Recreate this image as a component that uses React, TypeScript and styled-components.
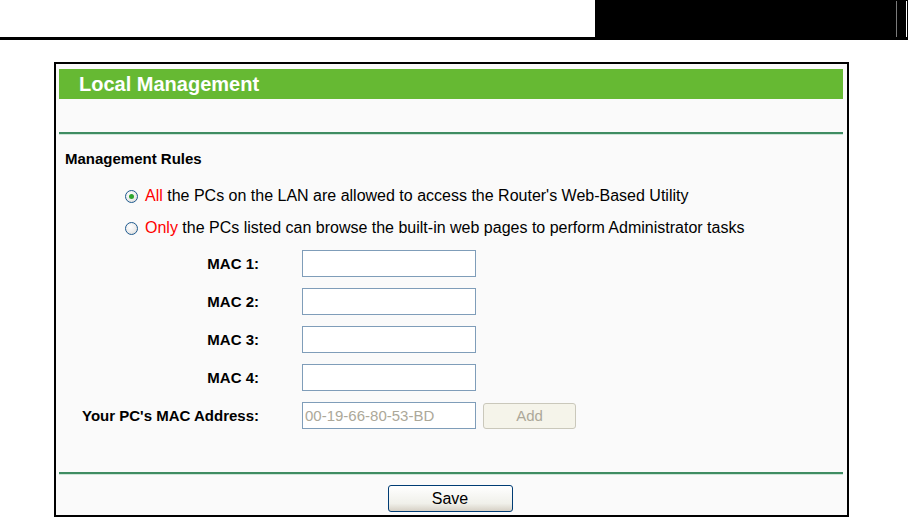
import React from 'react'
import styled, { createGlobalStyle } from 'styled-components'

const GlobalStyle = createGlobalStyle`
  html, body {
    margin: 0;
    padding: 0;
    background: #ffffff;
    font-family: 'Liberation Sans', Arial, sans-serif;
  }
`

const TopBar = styled.div`
  display: flex;
  justify-content: flex-end;
  border-bottom: 3px solid #000;
`

const BlackTab = styled.div`
  width: 313px;
  height: 37px;
  background: #000;
  display: flex;
  justify-content: flex-end;
  align-items: flex-end;
  gap: 9px;
  padding-right: 1px;
  box-sizing: border-box;
`

const Rule = styled.span<{ $tone: string }>`
  width: 1px;
  height: 36px;
  background: ${({ $tone }) => $tone};
`

const Panel = styled.div`
  margin: 22px 0 0 54px;
  width: 795px;
  height: 455px;
  box-sizing: border-box;
  border: 2px solid #000;
  background: #fafafa;
  padding: 5px 4px 0 3px;
`

const TitleBar = styled.div`
  height: 30px;
  background: #66b933;
  color: #fff;
  font-weight: bold;
  font-size: 20px;
  line-height: 30px;
  padding-left: 20px;
`

const Divider = styled.div<{ $top: number }>`
  margin-top: ${({ $top }) => $top}px;
  height: 2px;
  background: #3f8c62;
  box-shadow: 0 1px 0 #cfe5d9;
`

const Body = styled.div`
  padding-left: 6px;
`

const SectionTitle = styled.div`
  margin-top: 17px;
  font-size: 15px;
  font-weight: bold;
  line-height: 16px;
  color: #000;
`

const Options = styled.div`
  margin-top: 19px;
  padding-left: 60px;
  display: flex;
  flex-direction: column;
  gap: 12px;
`

const Option = styled.label`
  display: flex;
  align-items: center;
  height: 20px;
  gap: 7px;
  font-size: 16px;
  color: #000;
`

const Radio = styled.span<{ $checked?: boolean }>`
  width: 11px;
  height: 11px;
  border-radius: 50%;
  border: 1px solid #1e5a8f;
  background: radial-gradient(circle at 40% 35%, #ffffff 0%, #ececec 55%, #d2d2cc 100%);
  display: flex;
  align-items: center;
  justify-content: center;
  &::after {
    content: '';
    width: 5px;
    height: 5px;
    border-radius: 50%;
    background: ${({ $checked }) => ($checked ? '#2ea52e' : 'transparent')};
  }
`

const Red = styled.span`
  color: #ff0000;
`

const Fields = styled.div`
  margin-top: 12px;
  display: grid;
  grid-template-columns: 230px 174px 93px;
  column-gap: 7px;
  row-gap: 11px;
  align-items: center;
  justify-content: start;
`

const Label = styled.div`
  font-size: 15px;
  font-weight: bold;
  text-align: right;
  color: #000;
  padding-right: 36px;
  white-space: nowrap;
`

const TextBox = styled.input`
  width: 174px;
  height: 27px;
  box-sizing: border-box;
  border: 1px solid #7f9db9;
  background: #fff;
  font-family: 'Liberation Sans', Arial, sans-serif;
  font-size: 15px;
  padding: 0 2px;
  color: #000;
  &:disabled {
    color: #aca899;
    background: #fff;
  }
`

const Blank = styled.div``

const AddButton = styled.button`
  width: 93px;
  height: 26px;
  border: 1px solid #cac8bb;
  border-radius: 3px;
  background: #f5f4ea;
  color: #aca899;
  font-family: 'Liberation Sans', Arial, sans-serif;
  font-size: 15px;
`

const Footer = styled.div`
  display: flex;
  justify-content: center;
  padding: 11px 0 0 0;
`

const SaveButton = styled.button`
  width: 125px;
  height: 27px;
  border: 1px solid #003c74;
  border-radius: 3px;
  background: linear-gradient(#ffffff, #f0f0ea 70%, #d6d0c5);
  color: #000;
  font-family: 'Liberation Sans', Arial, sans-serif;
  font-size: 16px;
  margin-right: 2px;
`

const macs = ['MAC 1:', 'MAC 2:', 'MAC 3:', 'MAC 4:']

export default function App() {
  return (
    <>
      <GlobalStyle />
      <TopBar>
        <BlackTab>
          <Rule $tone="#7a7a7a" />
          <Rule $tone="#ffffff" />
        </BlackTab>
      </TopBar>
      <Panel>
        <TitleBar>Local Management</TitleBar>
        <Divider $top={33} />
        <Body>
          <SectionTitle>Management Rules</SectionTitle>
          <Options>
            <Option>
              <Radio $checked />
              <span>
                <Red>All</Red> the PCs on the LAN are allowed to access the Router's Web-Based Utility
              </span>
            </Option>
            <Option>
              <Radio />
              <span>
                <Red>Only</Red> the PCs listed can browse the built-in web pages to perform Administrator tasks
              </span>
            </Option>
          </Options>
          <Fields>
            {macs.map((m) => (
              <React.Fragment key={m}>
                <Label>{m}</Label>
                <TextBox />
                <Blank />
              </React.Fragment>
            ))}
            <Label>Your PC's MAC Address:</Label>
            <TextBox disabled defaultValue="00-19-66-80-53-BD" />
            <AddButton disabled>Add</AddButton>
          </Fields>
        </Body>
        <Divider $top={43} />
        <Footer>
          <SaveButton>Save</SaveButton>
        </Footer>
      </Panel>
    </>
  )
}
